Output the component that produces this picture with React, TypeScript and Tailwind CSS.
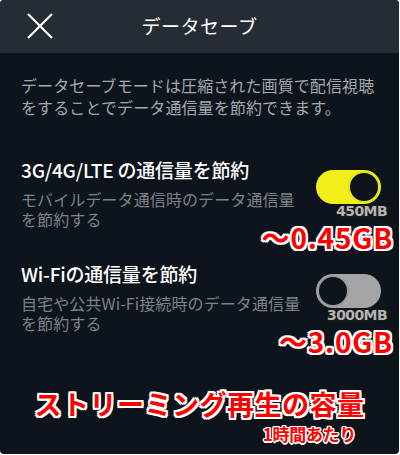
import type { ReactNode } from 'react';

const jp = { fontFamily: '"Noto Sans CJK JP", "Noto Sans", sans-serif' };

const redOutline =
  '[text-shadow:2px_0_0_#fff,-2px_0_0_#fff,0_2px_0_#fff,0_-2px_0_#fff,2px_2px_0_#fff,-2px_-2px_0_#fff,2px_-2px_0_#fff,-2px_2px_0_#fff]';

function Toggle({ on }: { on: boolean }) {
  return (
    <div
      className={
        'shrink-0 w-[65px] h-[34px] rounded-full flex items-center ' +
        (on ? 'bg-[#f2ee1c] justify-end pr-[1px]' : 'bg-[#a3a5a7] justify-start pl-[1px]')
      }
    >
      <div
        className={
          'shrink-0 w-[32px] h-[32px] rounded-full bg-[#0d141b] ' +
          (on ? 'border-[2px] border-[#e8e41a]' : 'border-[2px] border-[#9a9c9e]')
        }
      />
    </div>
  );
}

function Item({
  title,
  lines,
  on,
  mb,
  gb,
}: {
  title: string;
  lines: ReactNode;
  on: boolean;
  mb: string;
  gb: string;
}) {
  return (
    <div className="relative flex items-start justify-between">
      <div>
        <div className="text-[19px] leading-[24px] font-medium text-white tracking-[-0.2px]">{title}</div>
        <div className="mt-[7px] text-[16px] leading-[20px] text-[#7f8388] tracking-[0.1px]">{lines}</div>
      </div>
      <div className="shrink-0 mt-[12px] mr-[-3px]">
        <Toggle on={on} />
      </div>
      {/* annotations laid over the row */}
      <div className="absolute right-[-15px] top-[46px] flex flex-col items-end">
        <span
          className="mr-[6px] text-[14px] leading-[15px] font-bold text-[#b4b4b4] tracking-[-0.6px] [text-shadow:1px_0_0_#1a1a1a,-1px_0_0_#1a1a1a,0_1px_0_#1a1a1a,0_-1px_0_#1a1a1a,1px_1px_0_#1a1a1a,-1px_-1px_0_#1a1a1a,1px_-1px_0_#1a1a1a,-1px_1px_0_#1a1a1a]"
          style={{ fontFamily: '"DejaVu Sans", sans-serif' }}
        >
          {mb}
        </span>
        <span className={'mt-[4px] text-[28px] leading-[28px] font-bold text-[#ff0000] tracking-[0.8px] ' + redOutline} style={jp}>
          〜{gb}
        </span>
      </div>
    </div>
  );
}

export default function App() {
  return (
    <div className="w-[400px] h-[455px] bg-white" style={jp}>
      <div className="w-[399px] h-[454px] rounded-[4px] overflow-hidden bg-[#0d141b] flex flex-col">
        <div className="relative h-[53px] bg-[#262c33] flex items-center justify-center">
          <svg className="absolute left-[27px] top-[13px]" width="26" height="26" viewBox="0 0 26 26">
            <path d="M1 1L25 25M25 1L1 25" stroke="#ffffff" strokeWidth="2.2" />
          </svg>
          <span className="text-[19px] text-white tracking-[0.5px]">データセーブ</span>
        </div>
        <div className="px-[21px] flex flex-col">
          <p className="mt-[21px] text-[16px] leading-[22px] text-[#a5a9ad] tracking-[0.1px]">
            データセーブモードは圧縮された画質で配信視聴
            <br />
            をすることでデータ通信量を節約できます。
          </p>
          <div className="mt-[40px]">
            <Item
              title="3G/4G/LTE の通信量を節約"
              lines={
                <>
                  モバイルデータ通信時のデータ通信量
                  <br />
                  を節約する
                </>
              }
              on
              mb="450MB"
              gb="0.45GB"
            />
          </div>
          <div className="mt-[33px]">
            <Item
              title="Wi-Fiの通信量を節約"
              lines={
                <>
                  自宅や公共Wi-Fi接続時のデータ通信量
                  <br />
                  を節約する
                </>
              }
              on={false}
              mb="3000MB"
              gb="3.0GB"
            />
          </div>
          <div className="mt-[56px] flex flex-col items-center">
            <span className={'text-[27px] leading-[30px] font-bold text-[#ff0000] tracking-[0.5px] ' + redOutline}>
              ストリーミング再生の容量
            </span>
            <span className="self-end mr-[22px] mt-[6px] text-[17px] leading-[18px] font-bold text-[#ff0000] tracking-[-0.3px] [text-shadow:1.5px_0_0_#fff,-1.5px_0_0_#fff,0_1.5px_0_#fff,0_-1.5px_0_#fff,1px_1px_0_#fff,-1px_-1px_0_#fff,1px_-1px_0_#fff,-1px_1px_0_#fff]">
              1時間あたり
            </span>
          </div>
        </div>
      </div>
    </div>
  );
}
